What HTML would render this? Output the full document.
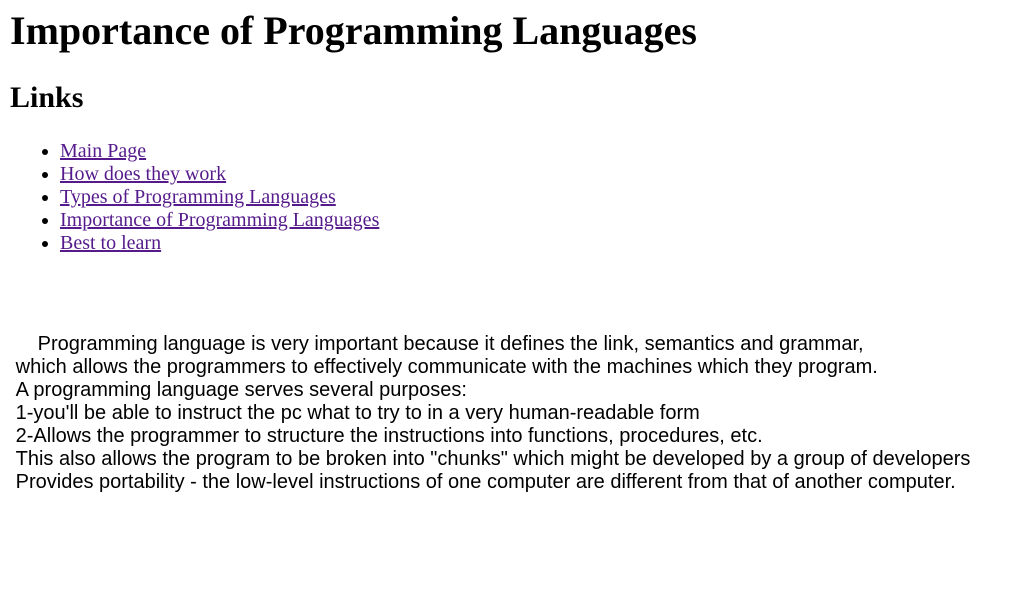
<!DOCTYPE html>
<html><head><meta charset="utf-8"><style>
html{zoom:1.25}
body{margin:5.6px 8px 8px;font-family:"Liberation Serif",serif;color:#000;background:#fff}
h1{font-size:32px;margin:0 0 21.44px}
h2{font-size:24px;margin:0 0 19.92px}
ul{margin:0;padding-left:40px;font-size:16px}
a{color:#551a8b}
p{font-family:"Liberation Sans",sans-serif;font-size:16px;line-height:18.4px;margin:62.4px 0 0;padding-left:4.5px;white-space:nowrap}
.i{display:inline-block;width:17.6px}
</style></head><body>
<h1>Importance of Programming Languages</h1>
<h2>Links</h2>
<ul>
<li><a href="#">Main Page</a></li>
<li><a href="#">How does they work</a></li>
<li><a href="#">Types of Programming Languages</a></li>
<li><a href="#">Importance of Programming Languages</a></li>
<li><a href="#">Best to learn</a></li>
</ul>
<p><span class="i"></span>Programming language is very important because it defines the link, semantics and grammar,<br>which allows the programmers to effectively communicate with the machines which they program.<br>A programming language serves several purposes:<br>1-you'll be able to instruct the pc what to try to in a very human-readable form<br>2-Allows the programmer to structure the instructions into functions, procedures, etc.<br>This also allows the program to be broken into "chunks" which might be developed by a group of developers<br>Provides portability - the low-level instructions of one computer are different from that of another computer.</p>
</body></html>
